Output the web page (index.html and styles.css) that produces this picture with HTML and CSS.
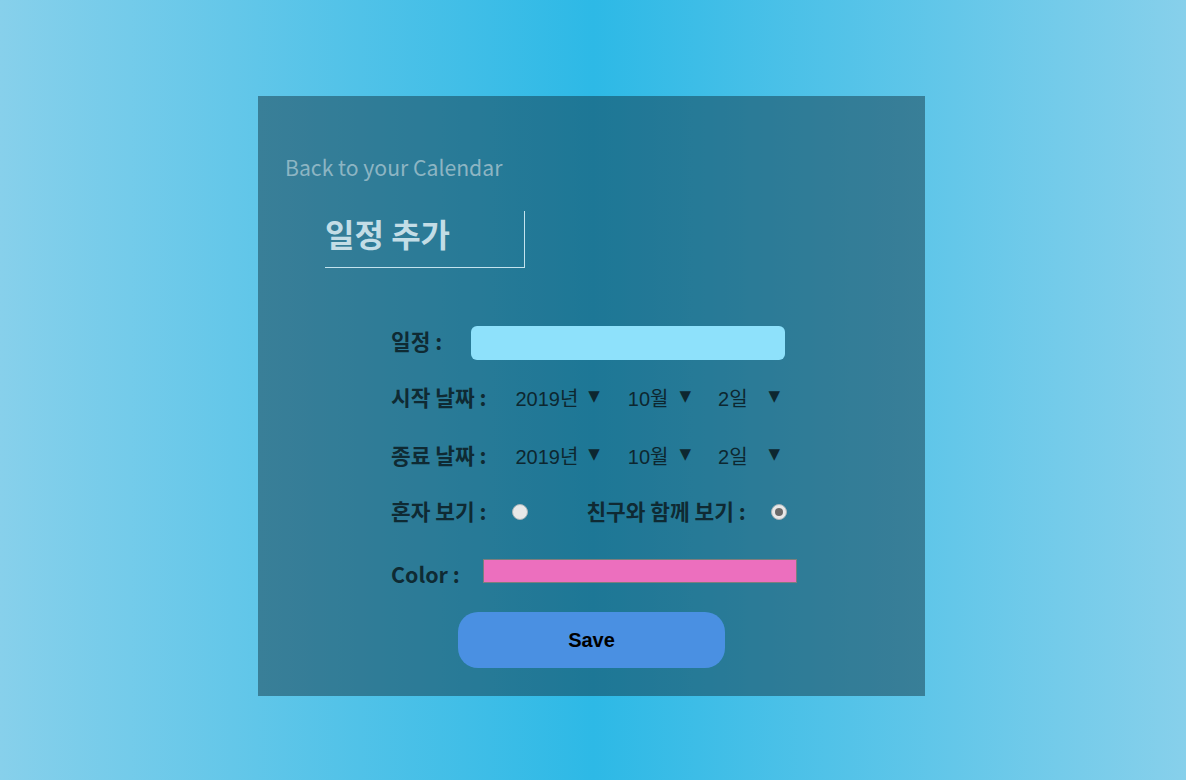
FILE: index.html
```html
<!DOCTYPE html>
<html lang="en">
<head>
<meta charset="utf-8">
<title>일정 추가</title>
<link rel="stylesheet" href="styles.css">
</head>
<body>
<div class="card">
  <a class="back" href="#">Back to your Calendar</a>
  <div class="title-box"><h1 class="title">일정 추가</h1></div>
  <form class="form">
    <div class="row row-text">
      <span class="label">일정 :</span>
      <span class="text-input"></span>
    </div>
    <div class="row row-date">
      <span class="label">시작 날짜 :</span>
      <span class="sel sel-year"><span class="val">2019년</span><span class="arrow">▼</span></span>
      <span class="sel sel-month"><span class="val">10월</span><span class="arrow">▼</span></span>
      <span class="sel sel-day"><span class="val">2일</span><span class="arrow">▼</span></span>
    </div>
    <div class="row row-date">
      <span class="label">종료 날짜 :</span>
      <span class="sel sel-year"><span class="val">2019년</span><span class="arrow">▼</span></span>
      <span class="sel sel-month"><span class="val">10월</span><span class="arrow">▼</span></span>
      <span class="sel sel-day"><span class="val">2일</span><span class="arrow">▼</span></span>
    </div>
    <div class="row row-radio">
      <span class="label">혼자 보기 :</span>
      <span class="radio radio-alone"></span>
      <span class="label label-friends">친구와 함께 보기 :</span>
      <span class="radio checked"></span>
    </div>
    <div class="row row-color">
      <span class="label">Color :</span>
      <span class="color-input"></span>
    </div>
    <div class="row-save">
      <button type="button" class="save">Save</button>
    </div>
  </form>
</div>
</body>
</html>
```
FILE: styles.css
```css
html, body {
  margin: 0;
  padding: 0;
}
body {
  width: 1186px;
  height: 780px;
  background: linear-gradient(to right, #87d0eb 0%, #2db9e6 50%, #87d0eb 100%);
  font-family: "Noto Sans CJK KR", "Noto Sans", sans-serif;
  overflow: hidden;
}
.card {
  box-sizing: border-box;
  width: 667px;
  height: 600px;
  margin: 96px 0 0 258px;
  background: rgba(12, 41, 53, 0.45);
  padding: 56px 0 0 27px;
  display: flex;
  flex-direction: column;
  align-items: flex-start;
}
.back {
  font-size: 21.2px;
  line-height: 30px;
  color: #8db5c3;
  text-decoration: none;
  font-weight: 400;
}
.title-box {
  box-sizing: border-box;
  margin: 29px 0 0 40px;
  width: 200px;
  height: 57px;
  border-right: 1.5px solid #c4e3ee;
  border-bottom: 1.5px solid #c4e3ee;
  padding-top: 2px;
}
.title {
  margin: 0;
  font-size: 32px;
  font-weight: 700;
  color: #c3dde6;
  line-height: 40px;
}
.form {
  margin: 58px 0 0 106px;
  display: flex;
  flex-direction: column;
}
.row {
  display: flex;
  align-items: center;
  color: #0f2a33;
}
.label {
  font-size: 21.4px;
  font-weight: 700;
  color: #0f2a33;
  line-height: 30px;
  white-space: nowrap;
  margin-top: -4px;
}
.row-text {
  margin-top: 0;
  height: 34px;
}
.text-input {
  margin-left: 29px;
  width: 314px;
  height: 34px;
  background: #8ee1fb;
  border-radius: 6px;
}
.row-date {
  margin-top: 22px;
  height: 34px;
}
.row-date + .row-date {
  margin-top: 24px;
}
.sel {
  display: flex;
  align-items: center;
  font-family: "Liberation Sans", "Noto Sans CJK KR", sans-serif;
  font-size: 20px;
  color: #0d2730;
}
.sel .val {
  line-height: 30px;
}
.sel .arrow {
  font-family: "DejaVu Sans", sans-serif;
  font-size: 15px;
  margin-top: -6px;
}
.sel-year {
  margin-left: 29px;
}
.sel-year .arrow {
  margin-left: 10px;
}
.sel-month {
  margin-left: 28px;
}
.sel-month .arrow {
  margin-left: 11px;
}
.sel-day {
  margin-left: 27px;
}
.sel-day .arrow {
  margin-left: 21px;
}
.row-radio {
  margin-top: 22px;
  height: 34px;
}
.radio {
  box-sizing: border-box;
  width: 16px;
  height: 16px;
  border-radius: 50%;
  background: #e8e8e8;
  border: 1px solid #a9b4b8;
  margin-top: -2px;
  display: flex;
  align-items: center;
  justify-content: center;
}
.radio-alone {
  margin-left: 26px;
}
.label-friends {
  margin-left: 58px;
}
.radio.checked {
  margin-left: 25px;
}
.radio.checked::after {
  content: "";
  width: 8px;
  height: 8px;
  border-radius: 50%;
  background: #6a6a6a;
}
.row-color {
  margin-top: 27px;
  height: 30px;
}
.row-color .label {
  margin-top: 4px;
}
.color-input {
  box-sizing: border-box;
  margin-left: 23px;
  width: 314px;
  height: 24px;
  background: #ec6fbe;
  border: 1px solid #7d7d7d;
  margin-top: -2px;
}
.row-save {
  margin-top: 25px;
  padding-left: 67px;
}
.save {
  width: 267px;
  height: 56px;
  border: none;
  border-radius: 20px;
  background: #4a90e2;
  font-family: "Liberation Sans", Arial, sans-serif;
  font-size: 20px;
  font-weight: 700;
  color: #000;
  cursor: pointer;
}
```
